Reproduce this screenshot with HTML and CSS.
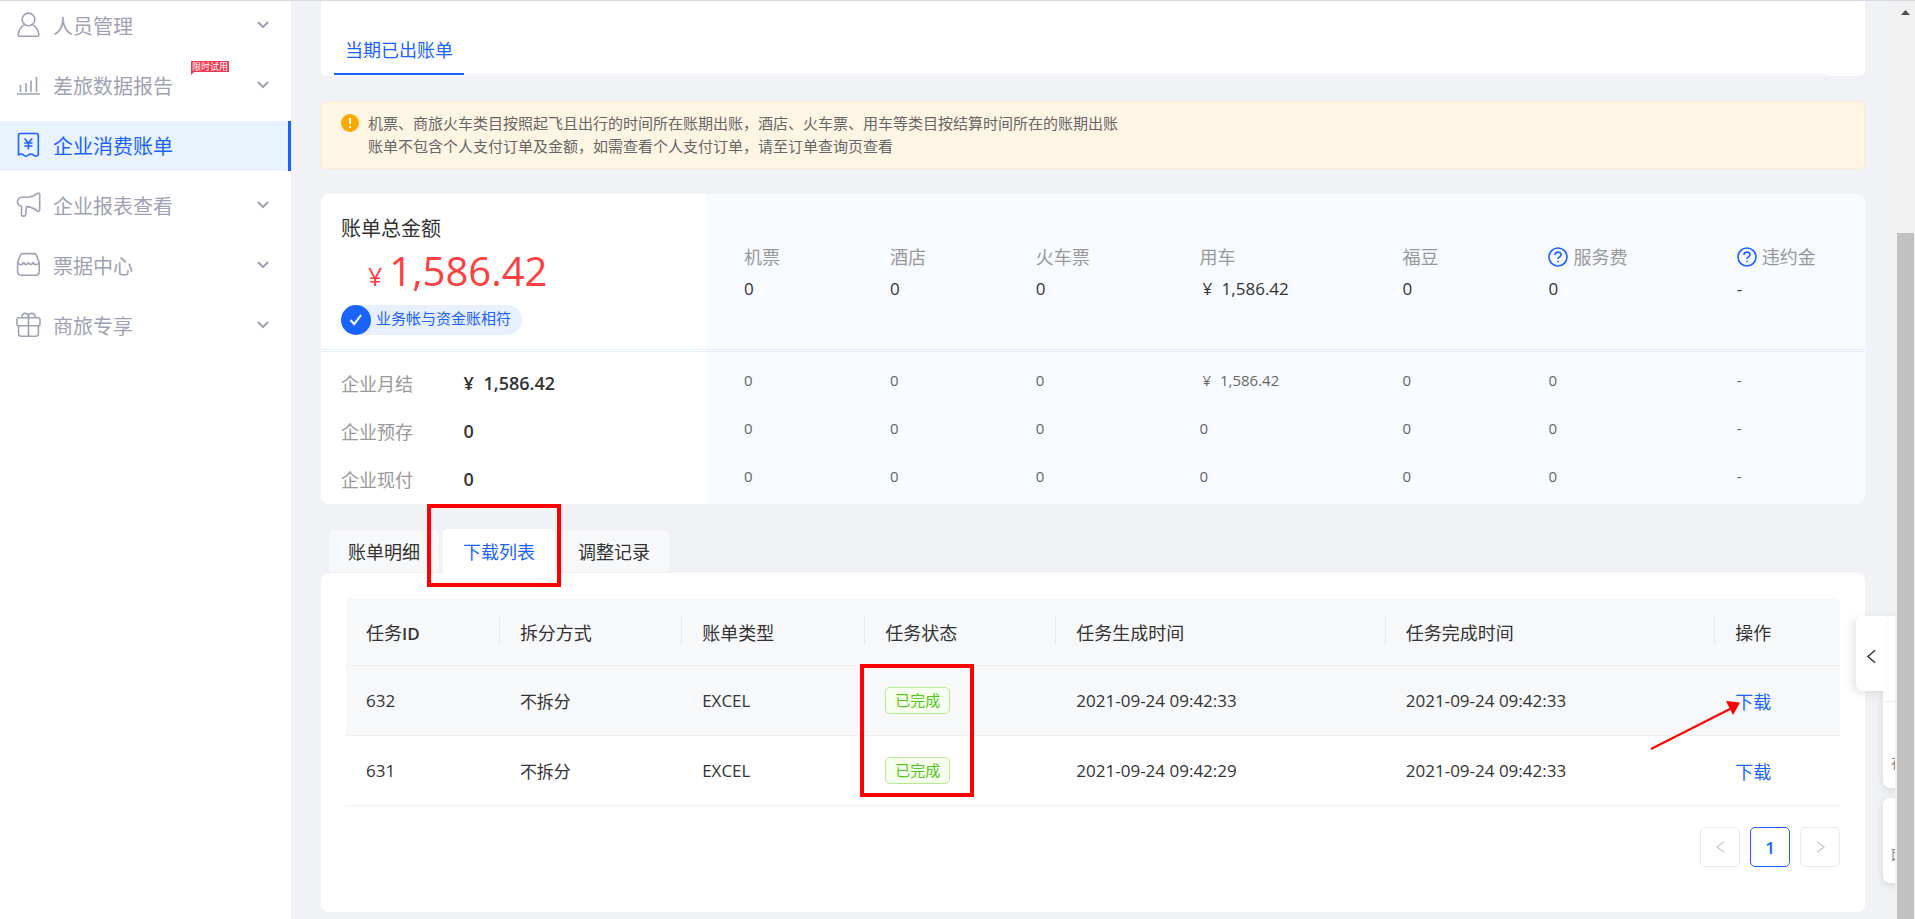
FILE: index.html
```html
<!DOCTYPE html>
<html lang="zh-CN">
<head>
<meta charset="utf-8">
<title>企业消费账单</title>
<link rel="stylesheet" href="styles.css">
</head>
<body>
<div class="page">
  <nav class="sidebar">
    <a class="menu-item" href="#">
      <svg class="menu-icon" viewBox="0 0 26 26"><circle cx="12.5" cy="6.4" r="6.3"/><path d="M8.600 11.600C5.400 13.200 3 16.400 2.200 21.200C2 22.400 2.700 23.300 3.800 23.300H21.200C22.300 23.300 23 22.400 22.800 21.200C22 16.400 19.600 13.200 16.400 11.600"/></svg>
      <span class="menu-text">人员管理</span>
      <svg class="chevron" viewBox="0 0 12 8"><path d="M1 1l5 5 5-5"/></svg>
    </a>
    <a class="menu-item" href="#">
      <svg class="menu-icon" viewBox="0 0 26 26"><path d="M1 21h23M4.500 12v7M10 10v9M15 7.500v11.500M20.500 4v15"/></svg>
      <span class="menu-text">差旅数据报告</span>
      <span class="trial">限时试用</span>
      <svg class="chevron" viewBox="0 0 12 8"><path d="M1 1l5 5 5-5"/></svg>
    </a>
    <a class="menu-item active" href="#">
      <svg class="menu-icon" viewBox="0 0 26 26"><path d="M2.500 22V2.500c0-1.100.9-2 2-2h15.800c1.100 0 2 .9 2 2V22c-1.600 1.400-3.300 1.400-4.900 0-1.700-1.300-3.300-1.300-5 0-1.600 1.400-3.300 1.400-4.900 0-1.700-1.300-3.300-1.300-5 0zM8.600 5.500l3.800 4.500 3.800-4.500M8.300 10h8.200M8.300 13h8.200M12.400 10v6.500"/></svg>
      <span class="menu-text">企业消费账单</span>
    </a>
    <a class="menu-item" href="#">
      <svg class="menu-icon" viewBox="0 0 26 26"><path d="M6 4.200h5c4.500 0 8-1.900 10.500-3.800.9-.6 2.200-.2 2.200.9v15.800c0 1.200-1.200 1.600-2.200.9-2.700-2-6-4.400-10.900-4.400l-1 8.200c-.3 2-4.500 1.700-4.300-.3l.4-8.200C3.200 12.800 1.500 11.200 1.500 8.800c0-2.700 2-4.600 4.500-4.600z"/></svg>
      <span class="menu-text">企业报表查看</span>
      <svg class="chevron" viewBox="0 0 12 8"><path d="M1 1l5 5 5-5"/></svg>
    </a>
    <a class="menu-item" href="#">
      <svg class="menu-icon" viewBox="0 0 26 26"><path d="M1.600 9.500L4.300 2.200C4.700 1 5.500.6 6.500.6h11.800c1 0 1.800.4 2.200 1.600l2.700 7.300v9c0 2.400-1.300 3.700-3.700 3.700H5.300c-2.400 0-3.700-1.300-3.700-3.700zM1.600 9.500c2.400 3 4.600 2.800 6.200 0 1.600 2.800 3.200 2.800 4.600 0 1.400 2.800 3 2.800 4.600 0 1.600 2.800 3.800 3 6.200 0"/></svg>
      <span class="menu-text">票据中心</span>
      <svg class="chevron" viewBox="0 0 12 8"><path d="M1 1l5 5 5-5"/></svg>
    </a>
    <a class="menu-item" href="#">
      <svg class="menu-icon" viewBox="0 0 26 26"><rect x="1" y="4.800" width="23" height="8" rx="1.800"/><path d="M2.600 12.800v8c0 1.600.8 2.400 2.400 2.400h15c1.600 0 2.400-.8 2.400-2.400v-8M12.500 4.800v18.400M5.800 4.600C5.500 1.800 7.500.2 9.600.4c2 .1 2.900 2 2.900 4.200 0-2.200.9-4.100 2.900-4.200 2.100-.2 4.100 1.400 3.800 4.200"/></svg>
      <span class="menu-text">商旅专享</span>
      <svg class="chevron" viewBox="0 0 12 8"><path d="M1 1l5 5 5-5"/></svg>
    </a>
  </nav>

  <main class="content">
    <section class="period">
      <div class="period-nav"><button class="period-tab" type="button">当期已出账单</button></div>
    </section>

    <section class="notice">
      <svg class="notice-icon" viewBox="0 0 18 18"><circle cx="9" cy="9" r="9"/><path d="M9 4v6M9 12v2"/></svg>
      <p class="notice-text">机票、商旅火车类目按照起飞且出行的时间所在账期出账，酒店、火车票、用车等类目按结算时间所在的账期出账<br>账单不包含个人支付订单及金额，如需查看个人支付订单，请至订单查询页查看</p>
    </section>

    <table class="summary">
      <colgroup><col class="s-label"><col class="s-total"><col class="s-a"><col class="s-a"><col class="s-b"><col class="s-c"><col class="s-a"><col class="s-d"><col class="s-e"></colgroup>
      <thead>
        <tr>
          <th class="total" colspan="2">
            <div class="total-title">账单总金额</div>
            <div class="total-amount"><span class="yen">¥</span><span>1,586.42</span></div>
            <div class="match"><span class="match-icon"><svg viewBox="0 0 14 12"><path d="M1.500 6l3.700 4.200L12 1.200"/></svg></span><span class="match-text">业务帐与资金账相符</span></div>
          </th>
          <th><div class="cat">机票</div><div class="sum">0</div></th>
          <th><div class="cat">酒店</div><div class="sum">0</div></th>
          <th><div class="cat">火车票</div><div class="sum">0</div></th>
          <th><div class="cat">用车</div><div class="sum"><span class="cny">¥</span> 1,586.42</div></th>
          <th><div class="cat">福豆</div><div class="sum">0</div></th>
          <th><div class="cat"><svg class="help" viewBox="0 0 20 20"><circle cx="10" cy="10" r="9"/><path d="M7 8c0-1.800 1.300-2.900 3-2.900s3 1.100 3 2.700c0 2-3 2.200-3 4.200M10 13.700v1.600"/></svg>服务费</div><div class="sum">0</div></th>
          <th><div class="cat"><svg class="help" viewBox="0 0 20 20"><circle cx="10" cy="10" r="9"/><path d="M7 8c0-1.800 1.300-2.900 3-2.900s3 1.100 3 2.700c0 2-3 2.200-3 4.200M10 13.700v1.600"/></svg>违约金</div><div class="sum">-</div></th>
        </tr>
      </thead>
      <tbody>
        <tr class="spacer"><td class="plain" colspan="2"></td><td colspan="7"></td></tr>
        <tr><th class="pay">企业月结</th><td class="pay-sum"><span class="cny">¥</span> 1,586.42</td><td>0</td><td>0</td><td>0</td><td><span class="cny">¥</span> 1,586.42</td><td>0</td><td>0</td><td>-</td></tr>
        <tr><th class="pay">企业预存</th><td class="pay-sum">0</td><td>0</td><td>0</td><td>0</td><td>0</td><td>0</td><td>0</td><td>-</td></tr>
        <tr><th class="pay">企业现付</th><td class="pay-sum">0</td><td>0</td><td>0</td><td>0</td><td>0</td><td>0</td><td>0</td><td>-</td></tr>
      </tbody>
    </table>

    <div class="tabs">
      <button class="tab" type="button">账单明细</button>
      <div class="tab-holder">
        <button class="tab current" type="button">下载列表</button>
        <span class="mark mark-tab"></span>
      </div>
      <button class="tab" type="button">调整记录</button>
    </div>

    <section class="panel">
      <table class="tasks">
        <colgroup><col class="t-id"><col class="t-split"><col class="t-type"><col class="t-state"><col class="t-time"><col class="t-time"><col class="t-op"></colgroup>
        <thead>
          <tr><th>任务<span class="latin">ID</span></th><th>拆分方式</th><th>账单类型</th><th>任务状态</th><th>任务生成时间</th><th>任务完成时间</th><th>操作</th></tr>
        </thead>
        <tbody>
          <tr class="hovered"><td>632</td><td>不拆分</td><td>EXCEL</td><td class="anchor"><span class="state">已完成</span><span class="mark mark-state"></span></td><td>2021-09-24 09:42:33</td><td>2021-09-24 09:42:33</td><td class="anchor"><a class="link" href="#">下载</a><svg class="arrow" viewBox="0 0 92 50"><path class="arrow-line" d="M1 48L82 7"/><path class="arrow-head" d="M90 1.500L76 0l7 14z"/></svg></td></tr>
          <tr><td>631</td><td>不拆分</td><td>EXCEL</td><td><span class="state">已完成</span></td><td>2021-09-24 09:42:29</td><td>2021-09-24 09:42:33</td><td><a class="link" href="#">下载</a></td></tr>
        </tbody>
      </table>
      <div class="pager">
        <button class="page-btn" type="button" aria-label="上一页"><svg viewBox="0 0 10 14"><path d="M9 1L1 7l8 6"/></svg></button>
        <button class="page-btn selected" type="button">1</button>
        <button class="page-btn" type="button" aria-label="下一页"><svg viewBox="0 0 10 14"><path d="M1 1l8 6-8 6"/></svg></button>
      </div>
    </section>
  </main>

  <aside class="dock">
    <button class="dock-toggle" type="button" aria-label="展开"><svg viewBox="0 0 10 16"><path d="M9 1L1 8l8 7"/></svg></button>
    <div class="dock-card dock-first"><div class="dock-top"></div><div class="dock-text">在</div></div>
    <div class="dock-card dock-second"><div class="dock-text">联</div></div>
  </aside>

  <div class="scroll">
    <svg class="scroll-up" viewBox="0 0 9 5"><path d="M0 5L4.500 0 9 5z"/></svg>
    <div class="scroll-thumb"></div>
  </div>
</div>
</body>
</html>
```
FILE: styles.css
```css
* { box-sizing: border-box; }
body {
  margin: 0;
  font-family: "Open Sans", "Noto Sans CJK SC", sans-serif;
  font-size: 17px;
  font-weight: 400;
  color: #333;
  background: #f0f2f6;
}
button { font: inherit; color: inherit; margin: 0; padding: 0; border: 0; background: none; cursor: pointer; }
a { text-decoration: none; }
svg { display: block; fill: none; overflow: visible; }
table { border-collapse: separate; border-spacing: 0; width: 100%; table-layout: fixed; }
th { font-weight: 400; text-align: left; }

.page { position: relative; display: flex; min-height: 100vh; border-top: 1px solid #d9dade; overflow: hidden; }

.sidebar { flex: 0 0 291px; display: flex; flex-direction: column; gap: 10px; background: #fff; }
.menu-item { position: relative; display: flex; align-items: center; height: 50px; padding: 0 22px 0 16px; color: #9fa2b4; font-size: 20px; }
.menu-icon { width: 26px; height: 26px; margin-right: 11px; stroke: currentColor; stroke-width: 1.600; stroke-linejoin: round; }
.menu-text { flex: 1; padding-top: 2px; line-height: 30px; }
.chevron { width: 12px; height: 8px; margin-bottom: 2px; stroke: currentColor; stroke-width: 2; }
.menu-item.active { color: #1a63ff; background: #e8f3ff; border-right: 3px solid #1a63ff; }
.trial { position: absolute; left: 191px; top: 0; height: 11px; padding: 0 1px; font-size: 9px; line-height: 11px; color: #fff; background: #f2384f; }
.trial::after { content: ""; position: absolute; left: 0; top: 11px; border-top: 3px solid #f2384f; border-right: 3px solid transparent; }

.content { flex: 1; min-width: 0; padding: 0 30px 6px; }

.period { padding: 0 37px 1px 13px; background: #fff; border-radius: 0 0 6px 6px; }
.period-nav { display: flex; height: 74px; align-items: flex-end; border-bottom: 1px solid #f0f0f0; }
.period-tab { height: 48px; padding: 0 11px 2px; margin-bottom: -1px; font-size: 18px; color: #1a63ff; border-bottom: 2px solid #1a63ff; }

.notice { display: flex; gap: 9px; margin-top: 25px; padding: 10px 19px; background: #fff5e4; border: 1px solid #ffebcb; border-radius: 5px; }
.notice-icon { width: 18px; height: 18px; margin-top: 2px; fill: #ffa800; }
.notice-icon path { stroke: #fff; stroke-width: 2; }
.notice-text { margin: 0; font-size: 15px; line-height: 23px; color: #666; }

.summary { margin-top: 25px; border-radius: 8px; overflow: hidden; background: #f7faff; }
.s-label { width: 9.1%; }
.s-total { width: 15.9%; }
.s-a { width: 9.450%; }
.s-b { width: 10.600%; }
.s-c { width: 13.150%; }
.s-d { width: 12.200%; }
.s-e { width: 10.700%; }
.summary th, .summary td { padding: 0 0 0 37px; }
.summary thead th { height: 158px; padding-top: 4px; border-bottom: 3px double #e6eefa; }
.summary thead .total { padding: 20px 0 0 20px; vertical-align: top; background: #fff; }
.total-title { font-size: 20px; line-height: 30px; }
.total-amount { display: flex; align-items: baseline; gap: 7px; padding-left: 27px; font-size: 40px; line-height: 54px; color: #ff4040; }
.yen { font-size: 25px; line-height: 30px; }
.match { display: flex; width: fit-content; margin-top: 7px; border-radius: 15px; background: #e8efff; }
.match-icon { display: flex; align-items: center; justify-content: center; width: 30px; height: 30px; border-radius: 50%; background: #1a63ff; }
.match-icon svg { width: 14px; height: 12px; stroke: #fff; stroke-width: 2; }
.match-text { padding: 0 11px 0 5px; font-size: 15px; line-height: 27px; color: #1a63ff; }
.cat { display: flex; align-items: center; font-size: 18px; line-height: 30px; color: #999; }
.sum { line-height: 34px; }
.cny { padding: 0 5px 0 3px; }
.help { width: 20px; height: 20px; margin-right: 5px; stroke: #1a63ff; stroke-width: 1.600; }
.summary .plain { background: #fff; }
.summary tbody tr { height: 48px; }
.summary tbody .spacer { height: 8px; }
.summary td { padding-bottom: 8px; font-size: 15px; color: #666; }
.summary .spacer td { padding: 0; }
.summary .pay { padding: 0 0 2px 20px; font-size: 18px; color: #999; background: #fff; }
.summary .pay-sum { padding: 0 0 2px 2px; font-size: 18px; font-weight: 600; color: #333; background: #fff; }
.pay-sum .cny { padding-left: 0; }

.tabs { display: flex; gap: 3px; margin-top: 25px; padding-left: 7px; }
.tab-holder { position: relative; display: flex; }
.tab { height: 44px; padding: 0 19px; font-size: 18px; border: 1px solid #f0f0f0; border-radius: 5px 5px 0 0; background: #f7f8fa; }
.tab.current { color: #1a63ff; background: #fff; border-color: #fff; }

.mark { position: absolute; z-index: 2; border: 4px solid #f00; pointer-events: none; }
.mark-tab { left: -16px; right: -6px; top: -25px; bottom: -14px; }
.mark-state { left: -5px; top: -2px; width: 114px; height: 133px; }

.panel { padding: 25px 25px 45px; background: #fff; border-radius: 8px; }
.t-id { width: 10.300%; }
.t-split { width: 12.200%; }
.t-type { width: 12.250%; }
.t-state { width: 12.800%; }
.t-time { width: 22.050%; }
.t-op { width: 8.350%; }
.tasks th { position: relative; height: 68px; padding: 0 0 0 20px; font-size: 18px; background: #f7f8fa; border-bottom: 1px solid #f0f0f0; }
.latin { font-size: 17px; font-weight: 600; }
.tasks th:first-child { border-top-left-radius: 5px; }
.tasks th:last-child { border-top-right-radius: 5px; }
.tasks th:not(:last-child)::after { content: ""; position: absolute; right: 0; top: 19px; width: 1px; height: 28px; background: #e8e9eb; }
.tasks td { height: 70px; padding: 0 0 0 20px; border-bottom: 1px solid #f0f0f0; }
.tasks .hovered td { background: #f7f8fa; }
.anchor { position: relative; }
.state { display: inline-block; padding: 0 9px; font-size: 15px; line-height: 25px; color: #52c41a; background: #f6ffed; border: 1px solid #b7eb8f; border-radius: 5px; }
.link { font-size: 18px; color: #1a63ff; }
.arrow { position: absolute; z-index: 2; left: -65px; top: 35px; width: 92px; height: 50px; }
.arrow-line { stroke: #f00; stroke-width: 2; }
.arrow-head { fill: #f00; }

.pager { display: flex; justify-content: flex-end; gap: 10px; margin-top: 21px; }
.page-btn { display: flex; align-items: center; justify-content: center; width: 40px; height: 40px; border: 1px solid #e8e9ec; border-radius: 5px; background: #fff; }
.page-btn svg { width: 9px; height: 12px; stroke: #c8cad0; stroke-width: 1.500; }
.page-btn.selected { font-weight: 600; color: #1a63ff; border-color: #1a63ff; }

.dock { position: absolute; right: 20px; top: 600px; width: 60px; height: 310px; padding-top: 15px; overflow: hidden; z-index: 3; }
.dock-toggle { position: absolute; z-index: 1; left: 21px; top: 15px; display: flex; align-items: center; justify-content: center; width: 30px; height: 75px; padding-top: 6px; background: #fff; border-radius: 7px 0 0 7px; box-shadow: -4px 2px 8px rgba(0, 0, 0, .1); }
.dock-toggle svg { width: 9px; height: 15px; stroke: #333; stroke-width: 1.600; }
.dock-card { width: 52px; margin-left: 48px; padding-left: 8px; background: #fff; border-radius: 7px; box-shadow: 0 2px 8px rgba(0, 0, 0, .12); }
.dock-first { height: 172px; }
.dock-second { height: 85px; margin-top: 10px; padding-top: 45px; }
.dock-top { height: 86px; margin: 0 0 48px -8px; border-bottom: 1px solid #eee; }
.dock-text { font-size: 15px; line-height: 24px; color: #888; }

.scroll { flex: 0 0 20px; display: flex; flex-direction: column; padding: 9px 1px 0 2px; background: #f1f1f1; }
.scroll-up { align-self: center; width: 9px; height: 5px; fill: #505050; }
.scroll-thumb { flex: 1; margin-top: 218px; background: #c1c1c1; }
```
